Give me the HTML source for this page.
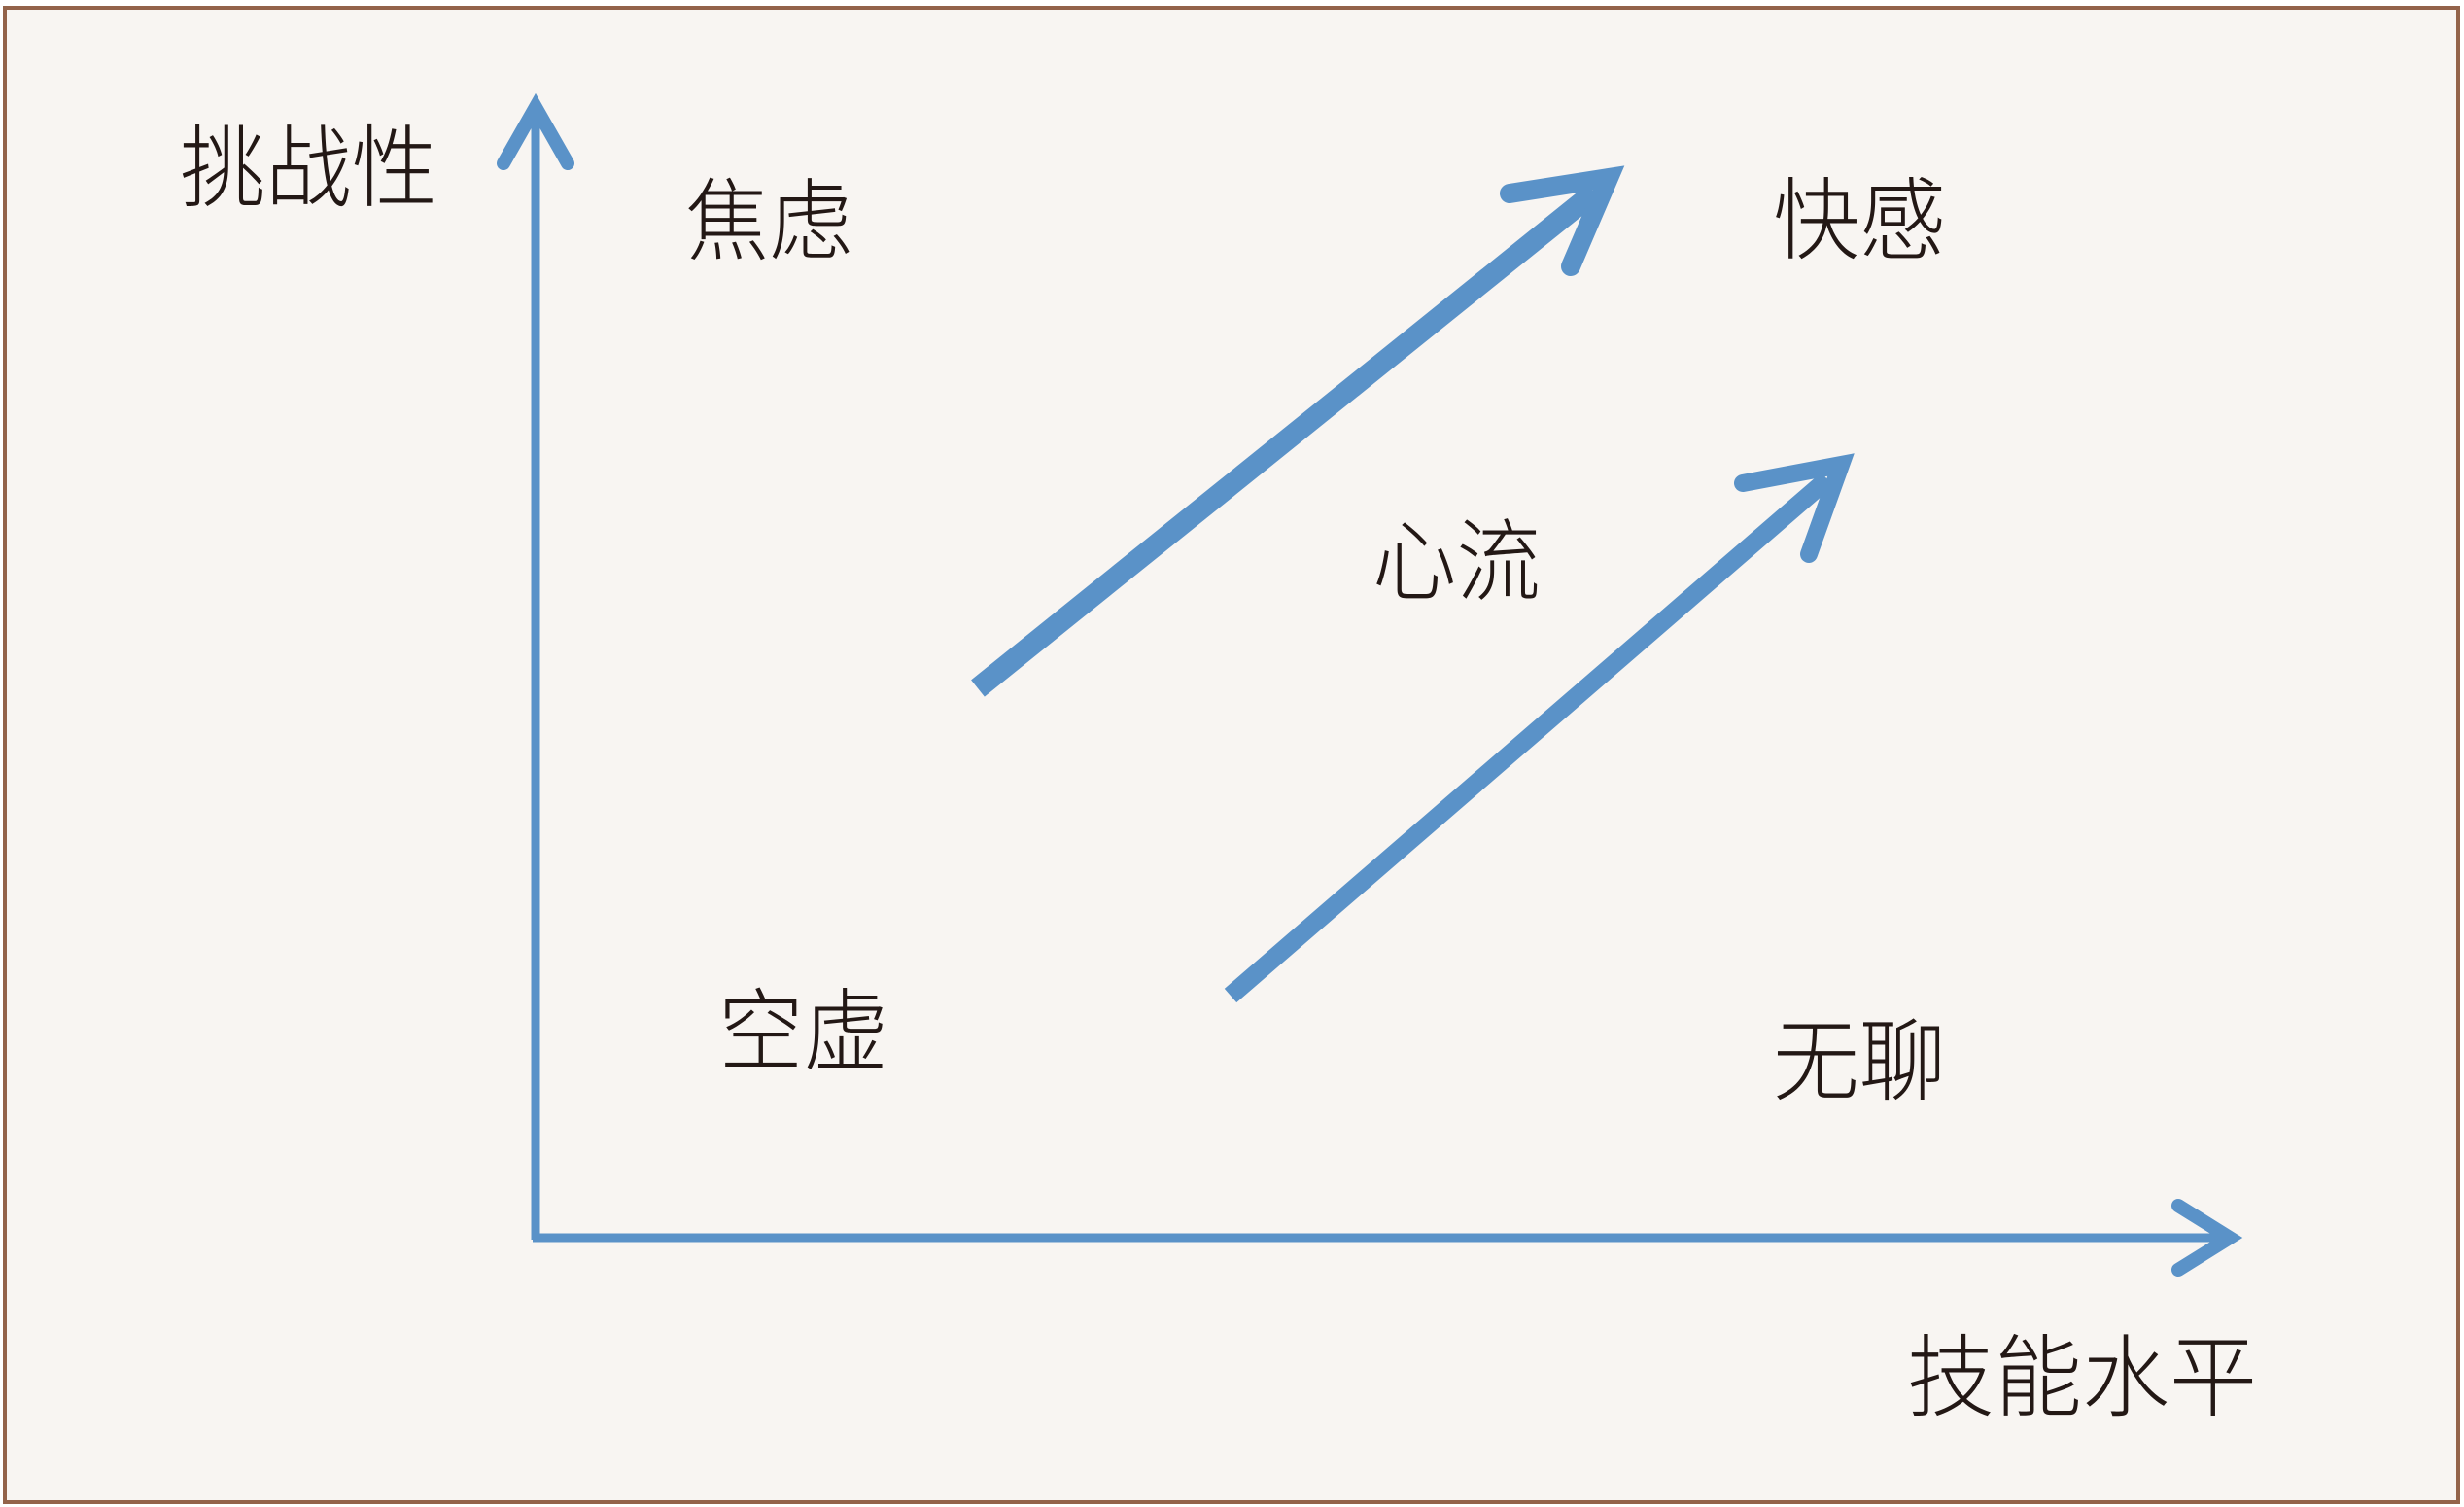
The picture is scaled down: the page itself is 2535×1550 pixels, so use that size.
<!DOCTYPE html>
<html><head><meta charset="utf-8"><style>
html,body{margin:0;padding:0;background:#fff;}
svg{display:block;}
text{font-family:"Liberation Sans","Noto Sans CJK SC",sans-serif;font-weight:300;fill:#231815;}
</style></head><body>
<svg width="2535" height="1550" viewBox="0 0 2535 1550" xmlns="http://www.w3.org/2000/svg">
<rect x="5" y="8" width="2524" height="1537" fill="#f8f5f2" stroke="#93634a" stroke-width="4"/>
<g stroke="#5a92c8" fill="none">
<line x1="551" y1="1275" x2="551" y2="110" stroke-width="9"/>
<polyline points="518,168 551,110 584,168" stroke-width="14" stroke-linecap="round" stroke-linejoin="miter"/>
<line x1="548" y1="1273" x2="2285" y2="1273" stroke-width="9"/>
<polyline points="2241,1240 2294,1273 2241,1306" stroke-width="14" stroke-linecap="round" stroke-linejoin="miter"/>
<line x1="1006" y1="708" x2="1640" y2="198" stroke-width="22"/>
<polyline points="1553,199 1655,183 1616,274" stroke-width="20" stroke-linecap="round" stroke-linejoin="miter"/>
<line x1="1266" y1="1024" x2="1880" y2="493" stroke-width="19"/>
<polyline points="1793,497 1894,478 1861,570" stroke-width="18" stroke-linecap="round" stroke-linejoin="miter"/>
</g>
<g font-size="92">
<text x="185" y="205" textLength="265" lengthAdjust="spacingAndGlyphs">挑战性</text>
<text x="705" y="260" textLength="172" lengthAdjust="spacingAndGlyphs">焦虑</text>
<text x="1824" y="259" textLength="178" lengthAdjust="spacingAndGlyphs">快感</text>
<text x="1412" y="610" textLength="173" lengthAdjust="spacingAndGlyphs">心流</text>
<text x="739" y="1093" textLength="175" lengthAdjust="spacingAndGlyphs">空虚</text>
<text x="1824" y="1124" textLength="178" lengthAdjust="spacingAndGlyphs">无聊</text>
<text x="1962" y="1449" textLength="360" lengthAdjust="spacingAndGlyphs">技能水平</text>
</g>
</svg>
</body></html>
